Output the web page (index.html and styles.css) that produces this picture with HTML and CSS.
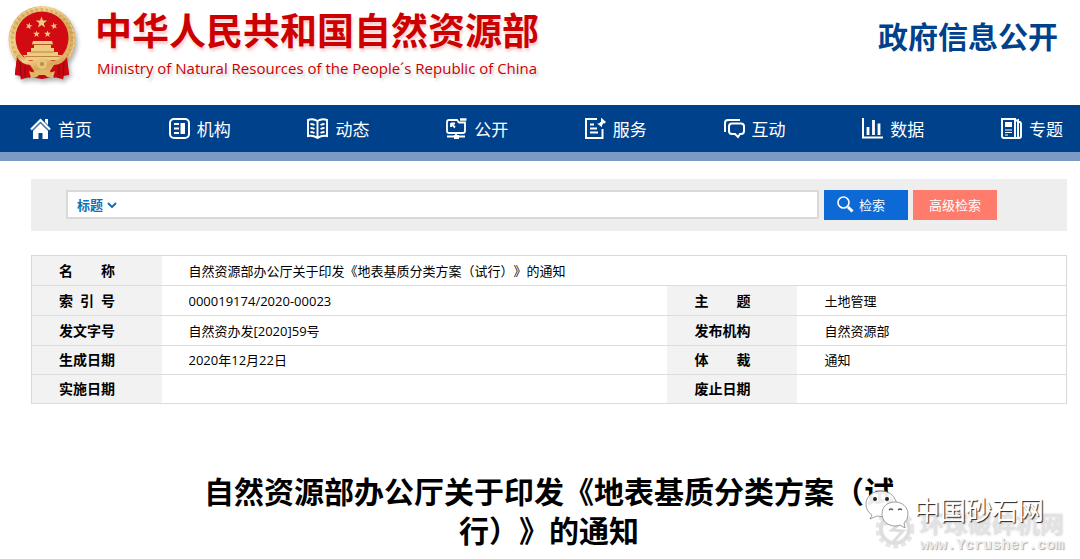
FILE: index.html
```html
<!DOCTYPE html>
<html lang="zh-CN">
<head>
<meta charset="utf-8">
<meta name="viewport" content="width=device-width, initial-scale=1">
<title>政府信息公开</title>
<link rel="stylesheet" href="styles.css">
</head>
<body>
<header class="site-header">
  <svg class="emblem" viewBox="0 0 72 78" aria-hidden="true">
    <defs>
      <linearGradient id="gold" x1="0" y1="0" x2="1" y2="1">
        <stop offset="0" stop-color="#c99a4c"/><stop offset=".3" stop-color="#efd08b"/>
        <stop offset=".6" stop-color="#d7a85a"/><stop offset="1" stop-color="#e6c27a"/>
      </linearGradient>
      <path id="star" d="M0-6 1.4-1.9 5.7-1.9 2.3.8 3.5 4.9 0 2.4-3.5 4.9-2.3.8-5.7-1.9-1.4-1.9z"/>
    </defs>
    <path d="M11 50 9 70l6 1 1 3 8-2 12 2 12-2 8 2 1-3 6-1-3-20z" fill="#c3060f"/>
    <circle cx="36" cy="34.500" r="33.500" fill="url(#gold)"/>
    <circle cx="36" cy="34.500" r="30" fill="none" stroke="#b98a42" stroke-width="3" stroke-dasharray="2 3" opacity=".45"/>
    <circle cx="36" cy="34.500" r="32" fill="none" stroke="#f6e2ad" stroke-width="1" stroke-dasharray="3 2"/>
    <circle cx="36" cy="33" r="26.500" fill="#d20a11"/>
    <g fill="#efcb80">
      <use href="#star" transform="translate(35.500 17.500)"/>
      <use href="#star" transform="translate(23 21) scale(.6) rotate(15)"/>
      <use href="#star" transform="translate(48 21) scale(.6) rotate(-15)"/>
      <use href="#star" transform="translate(30.500 29) scale(.6)"/>
      <use href="#star" transform="translate(41.500 29) scale(.6)"/>
      <path d="M27 36h19l1 3H26zM28 40h17v3H28zM25 43h23v4h4v3H21v-3h4zM17 50h39l-3 5H20z"/>
    </g>
    <path d="M26 39.500h21M24 47h24M19 51.500h35" stroke="#a97331" stroke-width=".8"/>
    <path d="M13 49Q22 58 28 55q8-3 16 0 6 3 15-6l4 5Q52 67 36 67 20 67 9 54z" fill="url(#gold)"/>
    <path d="M11 52Q15 59 24 60l4 6-4 7-6-3-3 5-1-5-5-1zM61 52q-4 7-13 8l-4 6 4 7 6-3 3 5 1-5 5-1z" fill="#c70813"/>
    <path d="M14 57l1 14M19 61v9M58 57l-1 14M53 61v9" stroke="#8f0610"/>
    <circle cx="36" cy="59" r="5" fill="#e7c47b"/><circle cx="36" cy="59" r="2" fill="#bb8b43"/>
    <path d="M23 66q6 3 9-1h8q3 4 9 1l-2 7q-6 0-8-3h-6q-2 3-8 3z" fill="#dfb766"/>
  </svg>
  <div class="brand">
    <div class="brand-name">中华人民共和国自然资源部</div>
    <div class="brand-en">Ministry of Natural Resources of the People´s Republic of China</div>
  </div>
  <div class="section-name">政府信息公开</div>
</header>

<nav class="main-nav">
  <a href="#"><svg class="icon" viewBox="0 0 21 21"><path d="M10.500 4.500 18 12v9h-5.500v-6h-4v6H3v-9z" fill="#fff"/><path d="M1 11.500 10.500 2l9.500 9.500" fill="none" stroke="#fff" stroke-width="2.200"/><path d="M15 1h3v6l-3-3z" fill="#fff"/><path d="M2.500 13 10.500 5l8 8" fill="none" stroke="#00418c" stroke-width=".8"/></svg>首页</a>
  <a href="#"><svg class="icon" viewBox="0 0 21 21"><rect x="1" y="1" width="19" height="19" rx="4" fill="none" stroke="#fff" stroke-width="2"/><path d="M5 6h5M5 10.500h5M5 15h5" stroke="#fff" stroke-width="2"/><path d="M11.500 5H16v11h-4.500z" fill="#fff"/></svg>机构</a>
  <a href="#"><svg class="icon" viewBox="0 0 21 21" fill="none" stroke="#fff" stroke-width="1.900"><path d="M10.500 3Q6 0 1 2v16q5-1 9.500 2 4.500-3 9.500-2V2q-5-2-9.500 1zv17"/><path d="M3.500 6q2 0 4 1M3.500 10q2 0 4 1M3.500 14q2 0 4 1M17.500 6q-2 0-4 1M17.500 10q-2 0-4 1M17.500 14q-2 0-4 1"/></svg>动态</a>
  <a href="#"><svg class="icon" viewBox="0 0 21 21" fill="none" stroke="#fff" stroke-width="1.800"><path d="M11 2H3Q1 2 1 4v9q0 2 2 2h14q2 0 2-2V4.500h-6z"/><path d="M14 1.500h6.500" stroke-width="2.500"/><path d="M5 5.500h4M5 5v4M5 5.500l4 4" stroke-width="1.800"/><path d="M10 15v3M1 18.500h18"/><path d="M8 17h5v4H8z" fill="#fff" stroke="none"/></svg>公开</a>
  <a href="#"><svg class="icon" viewBox="0 0 21 21" fill="none" stroke="#fff" stroke-width="2"><path d="M12 1H1v19h16.500v-9M5 6.500h4M5 10.500h7M5 14.500h8"/><path d="m16-.5 5 4.500-1.500 1.500-1-.2-1.500 2v2L12 5.500h2l2-2z" fill="#fff" stroke="none"/></svg>服务</a>
  <a href="#"><svg class="icon" viewBox="0 0 21 21" fill="none" stroke="#fff" stroke-width="2"><path d="M1 14V5q0-3 3-3h12"/><path d="M8 5.500h9q3 0 3 3V13q0 3-3 3h-1l-2 3-3-3H8q-3 0-3-3V8.500q0-3 3-3z"/></svg>互动</a>
  <a href="#"><svg class="icon" viewBox="0 0 21 21" fill="none" stroke="#fff" stroke-width="2"><path d="M1 0v19.500h20"/><path d="M6 9v8M11.500 2v15M17 5.500V17" stroke-width="2.800"/></svg>数据</a>
  <a href="#"><svg class="icon" viewBox="0 0 21 21" fill="none" stroke="#fff" stroke-width="1.900"><path d="M1 1h13v19H3q-2 0-2-2zM14 3l3-1v18h-3M17 4h1.500q1.500 0 1.500 2v12q0 2-2 2h-3"/><path d="M4 4h7v5H4z" fill="#fff" stroke="none"/><path d="M4 12h7M4 14.500h7M4 17h3" stroke-width="1.200"/></svg>专题</a>
</nav>

<main class="content">
  <form class="search" role="search">
    <div class="search-box">
      <div class="select-wrap">
        <select class="field-select" aria-label="检索字段"><option>标题</option></select>
        <svg class="chevron" viewBox="0 0 10 6" aria-hidden="true"><path d="m1 1 4 4 4-4" fill="none" stroke="#156fb6" stroke-width="2"/></svg>
      </div>
      <input class="search-input" type="text" aria-label="检索词">
    </div>
    <button class="btn btn-search" type="submit"><svg class="search-icon" viewBox="0 0 17 17" fill="none" stroke="#fff"><circle cx="6.500" cy="6.500" r="5.500" stroke-width="1.600"/><path d="m11 11 4.500 4.500" stroke-width="3"/></svg>检索</button>
    <button class="btn btn-advanced" type="button">高级检索</button>
  </form>

  <table class="meta">
    <colgroup><col class="col-label"><col><col class="col-label"><col class="col-side"></colgroup>
    <tr><th scope="row">名&emsp;&emsp;称</th><td colspan="3">自然资源部办公厅关于印发《地表基质分类方案（试行）》的通知</td></tr>
    <tr><th scope="row">索&ensp;引&ensp;号</th><td>000019174/2020-00023</td><th scope="row">主&emsp;&emsp;题</th><td>土地管理</td></tr>
    <tr><th scope="row">发文字号</th><td>自然资办发[2020]59号</td><th scope="row">发布机构</th><td>自然资源部</td></tr>
    <tr><th scope="row">生成日期</th><td>2020年12月22日</td><th scope="row">体&emsp;&emsp;裁</th><td>通知</td></tr>
    <tr><th scope="row">实施日期</th><td></td><th scope="row">废止日期</th><td></td></tr>
  </table>

  <h1 class="doc-title">自然资源部办公厅关于印发《地表基质分类方案（试<br>行）》的通知</h1>
</main>

<div class="mark mark-site">
  <svg class="gear" viewBox="0 0 40 40" fill="none" aria-hidden="true"><circle cx="20" cy="20" r="17.500" stroke="#e6e6e6" stroke-width="4" stroke-dasharray="5 3"/><circle cx="20" cy="20" r="14" stroke="#dedede" stroke-width="4"/><circle cx="20" cy="20" r="12" stroke="#f4f4f4" stroke-width="1"/><path d="M9 15 27 13 17 21l11 1-10 11" stroke="#dedede" stroke-width="3"/></svg>
  <div>
    <div class="mark-site-name">环球破碎机网</div>
    <div class="mark-site-url">www.Ycrusher.com</div>
  </div>
</div>
<div class="mark mark-account">
  <svg class="chat" viewBox="0 0 44 38" aria-hidden="true">
    <path d="M16 1C7 1 1 7 1 14q0 7 6 11l-2 4 7-3q12 3 18-5 3-4 1-10Q27 1 16 1z" fill="#fff" fill-opacity=".92" stroke="#777" stroke-width=".7"/>
    <circle cx="10" cy="9" r="2" fill="#222"/><circle cx="22" cy="9" r="2" fill="#222"/>
    <path d="M30 12c-8 0-13 5-13 12s6 12 13 12q3 0 5-1l5 3-1-5q4-3 4-9c0-7-6-12-13-12z" fill="#fff" stroke="#777" stroke-width=".7"/>
    <path d="M24 20q2-2 4 0M33 20q2-2 4 0" fill="none" stroke="#555" stroke-width="1.200"/>
  </svg>
  <span class="mark-account-name">中国砂石网</span>
</div>
</body>
</html>
```
FILE: styles.css
```css
* { box-sizing: border-box; }

body {
  margin: 0;
  position: relative;
  overflow-x: hidden;
  background: #fff;
  color: #000;
  font-family: "Open Sans", "Noto Sans CJK SC", sans-serif;
  font-size: 13px;
  text-spacing-trim: space-all;
}

.site-header {
  display: flex;
  align-items: flex-start;
  padding: 5px 22px 0 6px;
  height: 105px;
}

.emblem {
  width: 72px;
  height: 78px;
  margin-right: 17px;
  filter: drop-shadow(2px 3px 2px rgba(0, 0, 0, .3));
}

.brand {
  flex: 1;
  color: #c00;
}

.brand-name {
  font-size: 37px;
  line-height: 52px;
  font-weight: 700;
  text-shadow: 1px 3px 3px rgba(204, 0, 0, .2);
}

.brand-en {
  padding-left: 2px;
  font-size: 15px;
  line-height: 22px;
  text-shadow: 2px 3px 3px rgba(0, 0, 0, .2);
}

.section-name {
  padding-top: 10px;
  color: #00418c;
  font-size: 30px;
  line-height: 44px;
  font-weight: 700;
}

.main-nav {
  display: grid;
  grid-template-columns: repeat(7, 1fr) auto;
  padding: 0 17px 0 30px;
  background: #00418c;
  border-bottom: 9px solid #7a9bc3;
}

.main-nav a {
  display: flex;
  align-items: center;
  gap: 7px;
  height: 47px;
  color: #fff;
  font-size: 17px;
  text-decoration: none;
}

.icon {
  width: 21px;
  height: 21px;
}

.content {
  padding: 18px 13px 8px 31px;
}

.search {
  display: flex;
  gap: 5px;
  padding: 11px 70px 11px 35px;
  background: #eee;
}

.search-box {
  display: flex;
  flex: 1;
  height: 29px;
  background: #fff;
  border: 2px solid #d9d9d9;
}

.select-wrap {
  display: flex;
  align-items: center;
  padding-left: 9px;
}

.field-select {
  appearance: none;
  padding: 0;
  border: 0;
  background: none;
  color: #156fb6;
  font: inherit;
  font-weight: 700;
}

.chevron {
  width: 10px;
  height: 6px;
  margin-left: 3px;
}

.search-input {
  flex: 1;
  min-width: 0;
  border: 0;
  background: none;
  font: inherit;
  outline: 0;
}

.btn {
  display: flex;
  align-items: center;
  justify-content: center;
  gap: 5px;
  width: 84px;
  height: 30px;
  padding: 0 0 2px;
  border: 0;
  color: #fff;
  font: inherit;
}

.btn-search {
  padding-right: 10px;
  background: #0c69d6;
}

.btn-advanced { background: #ff7b6b; }

.search-icon {
  width: 17px;
  height: 17px;
}

.meta {
  width: 100%;
  margin-top: 24px;
  table-layout: fixed;
  border-collapse: collapse;
  border: 1px solid #d9d9d9;
  line-height: 20px;
}

.col-label { width: 130px; }
.col-side { width: 26%; }

.meta tr {
  height: 29px;
  border-bottom: 1px solid #dcdcdc;
}

.meta tr:nth-child(-n+3) { height: 30px; }

.meta th,
.meta td {
  padding: 4px 0 4px 27px;
  text-align: left;
}

.meta th {
  background: #f2f2f2;
  font-size: 14px;
}

.doc-title {
  margin: 68px 0 0;
  font-size: 30px;
  line-height: 39px;
  font-weight: 700;
  text-align: center;
}

.mark {
  position: absolute;
  display: flex;
}

.mark-site {
  top: 509px;
  right: 16px;
  gap: 5px;
}

.gear {
  width: 40px;
  height: 40px;
}

.mark-site-name {
  color: #e2e2e2;
  font-size: 24px;
  line-height: 30px;
  font-weight: 700;
  text-shadow: 0 0 3px #ddd;
}

.mark-site-url {
  color: #eee;
  font-family: "Liberation Mono", monospace;
  font-size: 15px;
  line-height: 14px;
  font-weight: 700;
  text-shadow: 1px 1px 1px #aaa;
}

.mark-account {
  top: 490px;
  right: 36px;
  gap: 5px;
}

.chat {
  width: 44px;
  height: 38px;
}

.mark-account-name {
  color: #fff;
  font-size: 26px;
  line-height: 40px;
  text-shadow: 1px 1px 1px #222;
}
```
